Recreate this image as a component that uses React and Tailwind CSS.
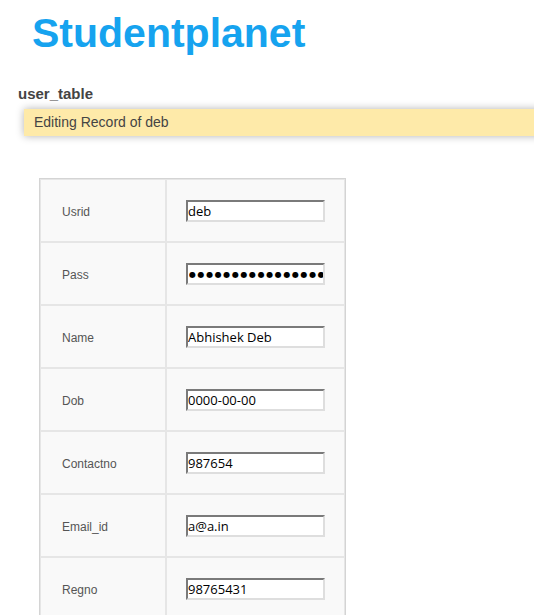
import React from 'react'

const fields = [
  { label: 'Usrid', value: 'deb' },
  { label: 'Pass', value: '●●●●●●●●●●●●●●●●●●●●', secret: true },
  { label: 'Name', value: 'Abhishek Deb' },
  { label: 'Dob', value: '0000-00-00' },
  { label: 'Contactno', value: '987654' },
  { label: 'Email_id', value: 'a@a.in' },
  { label: 'Regno', value: '98765431' },
]

function FieldRow({ label, value, secret }) {
  return (
    <tr>
      <td className="w-[126px] h-[63px] border border-[#e6e6e6] bg-[#f9f9f9] pl-[21px] pt-[2px] align-middle text-[12px] text-[#555] font-['Liberation_Sans',Arial,sans-serif]">
        {label}
      </td>
      <td className="w-[179px] h-[63px] border border-[#e6e6e6] bg-[#f9f9f9] pl-[19px] align-middle">
        <input
          type="text"
          readOnly
          value={value}
          className={
            secret
              ? "block w-[139px] h-[22px] mt-[1px] border-2 border-t-[#7a7a7a] border-l-[#7a7a7a] border-r-[#dedede] border-b-[#dedede] bg-white pl-[1px] text-[8px] text-black tracking-[1.6px] font-['DejaVu_Sans',sans-serif] outline-none"
              : "block w-[139px] h-[22px] mt-[1px] border-2 border-t-[#7a7a7a] border-l-[#7a7a7a] border-r-[#dedede] border-b-[#dedede] bg-white pl-[0px] text-[13px] text-black font-['Open_Sans','Noto_Sans',sans-serif] outline-none"
          }
        />
      </td>
    </tr>
  )
}

export default function App() {
  return (
    <div className="w-full min-h-[615px] bg-white overflow-hidden font-['Liberation_Sans',Arial,sans-serif]">
      <h1 className="mt-[13px] pl-[32px] text-[41px] leading-[40px] font-bold text-[#16a3ef]">
        Studentplanet
      </h1>

      <div className="mt-[32px] pl-[18px] text-[15px] leading-[18px] font-bold text-[#444]">
        user_table
      </div>

      {/* status bar */}
      <div className="mt-[6px] ml-[24px] mr-[-20px] h-[27px] bg-[#feeaa9] shadow-[0_0_8px_rgba(0,0,0,0.3)] pl-[10px] text-[14px] leading-[27px] text-[#444]">
        Editing Record of deb
      </div>

      <table className="mt-[42px] ml-[39px] border border-[#d4d4d4] border-separate border-spacing-0">
        <tbody>
          {fields.map(f => (
            <FieldRow key={f.label} {...f} />
          ))}
        </tbody>
      </table>
    </div>
  )
}
